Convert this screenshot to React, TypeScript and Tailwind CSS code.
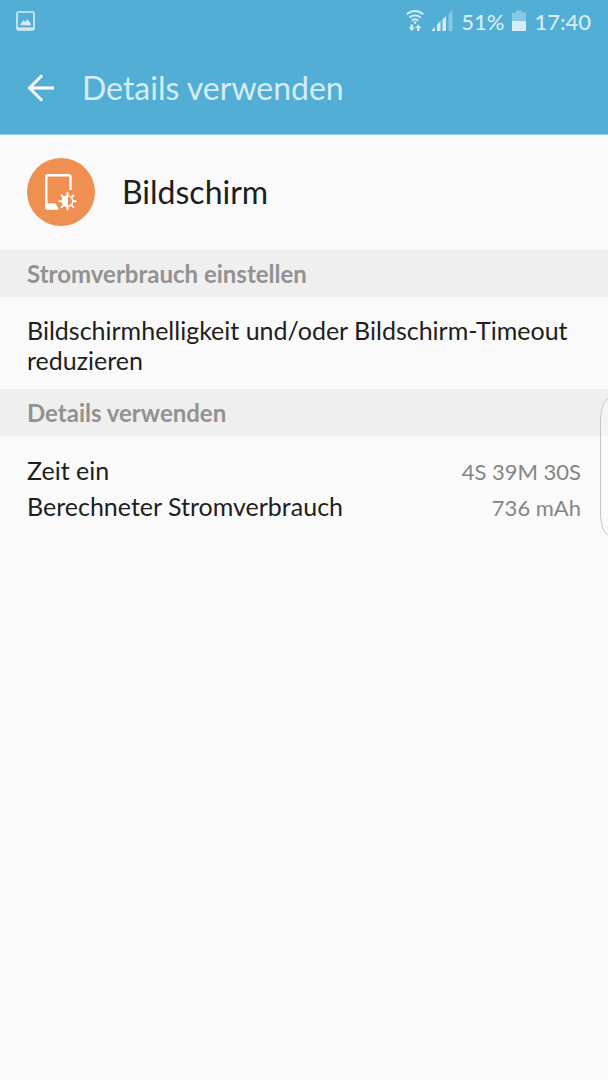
import type { ReactNode } from 'react';

interface UsageDetail {
  label: string;
  value: string;
}

const usageDetails: UsageDetail[] = [
  { label: 'Zeit ein', value: '4S 39M 30S' },
  { label: 'Berechneter Stromverbrauch', value: '736 mAh' },
];

function PictureIcon() {
  return (
    <svg width="19" height="20" viewBox="0 0 19 20" fill="none" aria-hidden="true">
      <rect x="1" y="1" width="17" height="18" rx="1.5" stroke="currentColor" strokeWidth="1.6" />
      <path d="M1 16.5h17v2H1z" fill="currentColor" />
      <path d="M4.5 14.3v-1.6l3-3.4 1.7 1.6 2.2-2.6 3.4 4.3v1.7z" fill="currentColor" />
    </svg>
  );
}

function WifiIcon() {
  return (
    <svg width="18" height="22" viewBox="0 0 18 22" fill="none" aria-hidden="true">
      <g stroke="currentColor" strokeWidth="2">
        <path d="M.8 4.200c4.800-4.200 11.600-4.200 16.400 0" />
        <path d="M3.400 7.500c3.300-2.800 7.900-2.800 11.200 0" />
        <path d="M5.800 10.600c2-1.600 4.400-1.600 6.400 0" />
      </g>
      <circle cx="9" cy="12.600" r="1.300" fill="currentColor" />
      <path d="M4.500 14.500h2.500v3h2L5.800 21l-3.200-3.500h1.900zM11 21h2.500v-3h1.900L12.200 14.500 9 18h2z" fill="currentColor" />
    </svg>
  );
}

function SignalIcon() {
  return (
    <svg width="21" height="22" viewBox="0 0 21 22" fill="currentColor" aria-hidden="true">
      <path d="M0 21v-1l3-3v4zM5 21v-6.500l3.500-3.500v10zM10.500 21V9.500L14 6v15z" />
      <path d="M16.500 21V4L20.500 0v21z" opacity=".4" />
    </svg>
  );
}

function BatteryIcon() {
  return (
    <svg width="14" height="22" viewBox="0 0 14 22" fill="currentColor" aria-hidden="true">
      <path d="M0 2.500h4V.5h6v2h4V11H0z" opacity=".4" />
      <path d="M0 11h14v10H0z" />
    </svg>
  );
}

function BackIcon() {
  return (
    <svg width="28" height="28" viewBox="0 0 28 28" fill="none" stroke="currentColor" strokeWidth="3" aria-hidden="true">
      <path d="M27 14H3M15 1.500L2.500 14 15 26.500" />
    </svg>
  );
}

function DisplayIcon() {
  return (
    <svg width="68" height="68" viewBox="0 0 68 68" className="shrink-0" aria-hidden="true">
      <circle cx="34" cy="34" r="34" fill="#ef9052" />
      <path d="M43.500 32V19.200a2 2 0 0 0-2-2H21.300a2 2 0 0 0-2 2v29.300" fill="none" stroke="#fff" strokeWidth="2.400" />
      <path d="M18.100 45.500h10.500l3.200 6.300H20.400a2.300 2.300 0 0 1-2.300-2.300z" fill="#fff" />
      <g transform="translate(40.500 43.200)">
        <g stroke="#fff" strokeWidth="1.900" strokeLinecap="round">
          <path d="M0-6v-2.400M0 6v2.400M-6 0h-2.400M6 0h2.400M-4.200-4.200l-1.700-1.700M4.200 4.200l1.700 1.700M4.200-4.200l1.700-1.700M-4.200 4.200l-1.700 1.700" />
        </g>
        <circle r="5.300" fill="none" stroke="#fff" strokeWidth="1.400" />
        <path d="M.3-5.800a5.800 5.800 0 0 0 0 11.600z" fill="#fff" />
      </g>
    </svg>
  );
}

function SectionHeader({ children }: { children: ReactNode }) {
  return (
    <h2 className="bg-[#efefef] px-[27px] py-2 text-[24px] leading-[31px] font-bold text-[#929292]">{children}</h2>
  );
}

export default function App() {
  return (
    <div className="relative min-h-screen bg-[#fafafa] font-['Lato',sans-serif] text-[#1e1e1e]">
      <header className="border-b border-[#9fcce0] bg-[#52aed5] text-[#d6edf7]">
        <div className="flex h-[42px] items-center justify-between pr-[17px] pl-4 text-[22px] font-medium">
          <PictureIcon />
          <div className="flex items-center gap-2">
            <WifiIcon />
            <SignalIcon />
            <span>51%</span>
            <BatteryIcon />
            <span>17:40</span>
          </div>
        </div>
        <div className="flex h-[92px] items-center gap-[27px] px-[27px]">
          <button type="button" aria-label="Zurück" className="text-white">
            <BackIcon />
          </button>
          <h1 className="text-[32px] leading-10">Details verwenden</h1>
        </div>
      </header>

      <main>
        <div className="flex items-center gap-[27px] px-[27px] pt-[23px] pb-6">
          <DisplayIcon />
          <p className="text-[32px] leading-10">Bildschirm</p>
        </div>

        <SectionHeader>Stromverbrauch einstellen</SectionHeader>
        <p className="px-[27px] pt-[18px] pb-[14px] text-[25px] leading-[30px]">
          Bildschirmhelligkeit und/oder Bildschirm-Timeout reduzieren
        </p>

        <SectionHeader>Details verwenden</SectionHeader>
        <dl className="px-[27px] py-4 text-[25px] leading-9">
          {usageDetails.map((detail) => (
            <div key={detail.label} className="flex h-9 items-baseline justify-between">
              <dt>{detail.label}</dt>
              <dd className="text-[22px] text-[#858585]">{detail.value}</dd>
            </div>
          ))}
        </dl>
      </main>

      {/* Edge panel handle */}
      <button type="button" aria-label="Seitenbildschirm öffnen" className="absolute top-[398px] right-0">
        <svg width="8" height="138" viewBox="0 0 8 138" aria-hidden="true">
          <path
            d="M8 1C3 4 .5 13 .5 24v90c0 11 2.500 20 7.500 23"
            fill="#fff"
            fillOpacity=".4"
            stroke="#c4c4c4"
          />
        </svg>
      </button>
    </div>
  );
}
